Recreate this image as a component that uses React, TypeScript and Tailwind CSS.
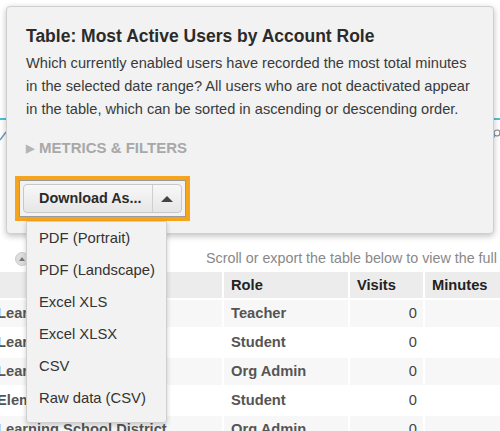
import React from 'react';

const rows = [
  { name: 'Learning School District', role: 'Teacher', visits: 0 },
  { name: 'Learning School District', role: 'Student', visits: 0 },
  { name: 'Learning School District', role: 'Org Admin', visits: 0 },
  { name: 'Elementary School', role: 'Student', visits: 0 },
  { name: 'Learning School District', role: 'Org Admin', visits: 0 },
];

const formats = ['PDF (Portrait)', 'PDF (Landscape)', 'Excel XLS', 'Excel XLSX', 'CSV', 'Raw data (CSV)'];

const App: React.FC = () => {
  return (
    <div
      className="relative w-[500px] h-[431px] overflow-hidden bg-white text-[#333]"
      style={{ fontFamily: '"Liberation Sans", Arial, sans-serif' }}
    >
      {/* Contenu de la page derrière la fenêtre */}
      <div className="h-[118px]" />
      <div className="h-[2px] bg-[#4dc1d8]" />
      <div className="flex justify-between h-[30px] items-center px-[1px]">
        <svg width="10" height="14" viewBox="0 0 10 14" className="-ml-[3px]">
          <path d="M2 12 L8 4" stroke="#6a9fc0" strokeWidth="1.5" fill="none" />
        </svg>
        <svg width="10" height="14" viewBox="0 0 10 14" className="-mr-[2px]">
          <circle cx="6" cy="5" r="3" stroke="#888" strokeWidth="1.2" fill="none" />
          <path d="M4 7 L1 12" stroke="#6a9fc0" strokeWidth="1.5" />
        </svg>
      </div>
      <div className="h-[96px]" />
      <div className="flex items-center h-[26px]">
        <div className="shrink-0 ml-[15px] w-[14px] h-[14px] rounded-full bg-[#ddd] border border-[#ccc] flex items-center justify-center">
          <div className="w-0 h-0 border-l-[3px] border-r-[3px] border-b-[4px] border-l-transparent border-r-transparent border-b-[#777]" />
        </div>
        <span className="shrink-0 ml-[177px] text-[14.3px] text-[#888] whitespace-nowrap">
          Scroll or export the table below to view the full
        </span>
      </div>

      {/* Tableau */}
      <div className="grid grid-cols-[224px_126px_75px_1fr] text-[14.7px]">
        <div className="h-[26px] bg-[#ececec] border-r-2 border-white" />
        <div className="h-[26px] bg-[#ececec] border-r-2 border-white font-bold flex items-center pl-[7px] text-[#222]">Role</div>
        <div className="h-[26px] bg-[#ececec] border-r-2 border-white font-bold flex items-center pl-[7px] text-[#222]">Visits</div>
        <div className="h-[26px] bg-[#ececec] font-bold flex items-center pl-[7px] text-[#222]">Minutes</div>
        {rows.map((r, i) => {
          const bg = i % 2 === 0 ? 'bg-[#f7f7f7]' : 'bg-white';
          return (
            <React.Fragment key={i}>
              <div className={`h-[29px] ${bg} border-t-2 border-r-2 border-[#fff] overflow-hidden flex items-center font-bold text-[#555] whitespace-nowrap`}>
                <span className="-ml-[3px]">{r.name}</span>
              </div>
              <div className={`h-[29px] ${bg} border-t-2 border-r-2 border-[#fff] flex items-center pl-[7px] font-bold text-[#555]`}>{r.role}</div>
              <div className={`h-[29px] ${bg} border-t-2 border-r-2 border-[#fff] flex items-center justify-end pr-[6px] text-[#444]`}>{r.visits}</div>
              <div className={`h-[29px] ${bg} border-t-2 border-[#fff]`} />
            </React.Fragment>
          );
        })}
      </div>

      {/* Fenêtre d'info */}
      <div className="absolute left-[6px] top-[6px] w-[488px] h-[228px] bg-[#f2f2f2] border border-[#cfcfcf] rounded-[4px] shadow-[0_2px_6px_rgba(0,0,0,0.25)] pl-[19px] pr-[18px] pt-[18px]">
        <h2 className="text-[17.5px] font-bold leading-[22px] text-[#2b2b2b] whitespace-nowrap">Table: Most Active Users by Account Role</h2>
        <p className="mt-[5px] text-[14.6px] leading-[22.8px] text-[#3a3a3a]">
          Which currently enabled users have recorded the most total minutes in the selected date range? All users who are not deactivated appear in the table, which can be sorted in ascending or descending order.
        </p>
        <div className="mt-[17px] flex items-center text-[15px] font-bold text-[#a8a8a8]">
          <span className="text-[11px] text-[#b5b5b5] mr-[5px]">▶</span>
          METRICS &amp; FILTERS
        </div>
      </div>

      {/* Bouton de téléchargement mis en évidence */}
      <div className="absolute left-[15px] top-[176px] w-[175px] h-[45px] border-[4px] border-[#f5a41c] shadow-[inset_0_0_0_1px_#9a9a9a] p-[4px] flex">
        <div className="flex flex-1 h-[29px] rounded-[4px] border border-[#c8c8c8] bg-gradient-to-b from-[#f8f8f8] to-[#e6e6e6]">
          <div className="flex items-center pl-[15px] w-[129px] border-r border-[#cfcfcf] text-[14.4px] font-bold text-[#2b2b2b] whitespace-nowrap">
            Download As...
          </div>
          <div className="flex-1 flex items-center justify-center">
            <div className="w-0 h-0 border-l-[6px] border-r-[6px] border-b-[6px] border-l-transparent border-r-transparent border-b-[#444]" />
          </div>
        </div>
      </div>

      {/* Menu déroulant */}
      <div className="absolute left-[26px] top-[221px] w-[141px] bg-[#f2f2f2] border border-[#cfcfcf] rounded-b-[3px] shadow-[0_2px_5px_rgba(0,0,0,0.2)] pb-[8px]">
        {formats.map((f) => (
          <div key={f} className="h-[32px] flex items-center pl-[12px] text-[14.8px] text-[#333] whitespace-nowrap">
            {f}
          </div>
        ))}
      </div>
    </div>
  );
};

export default App;
